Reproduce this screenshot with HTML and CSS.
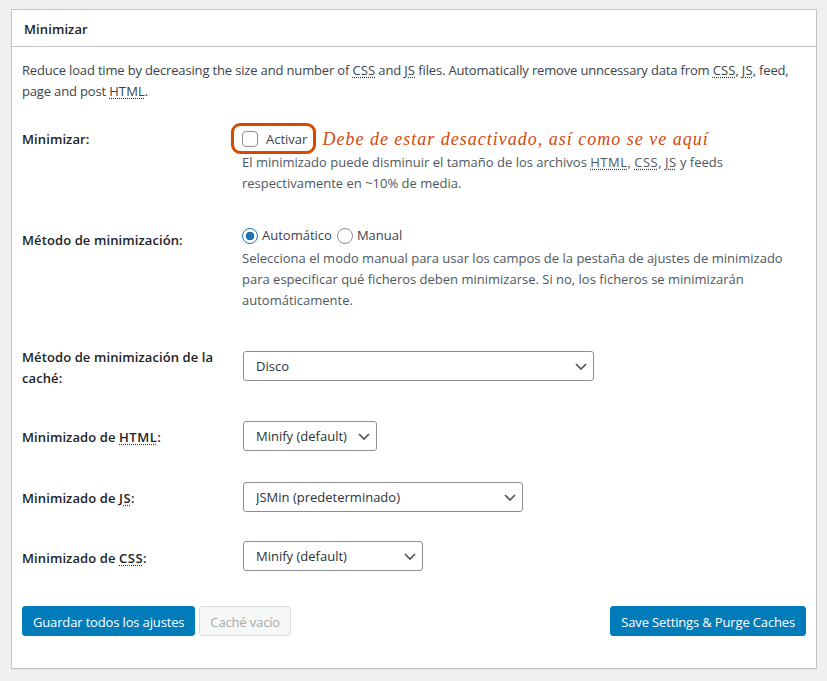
FILE: index.html
```html
<!DOCTYPE html>
<html lang="es">
<head>
<meta charset="utf-8">
<title>Minimizar</title>
<link rel="stylesheet" href="styles.css">
</head>
<body>
<section class="card">
  <h2 class="card-title">Minimizar</h2>
  <div class="card-body">
    <p class="intro">Reduce load time by decreasing the size and number of <abbr>CSS</abbr> and <abbr>JS</abbr> files. Automatically remove unncessary data from <abbr>CSS</abbr>, <abbr>JS</abbr>, feed, page and post <abbr>HTML</abbr>.</p>

    <div class="row row-enable">
      <div class="label">Minimizar:</div>
      <div class="field">
        <div class="control-line">
          <label class="check-label"><input type="checkbox" class="check"> Activar</label>
          <span class="note">Debe de estar desactivado, así como se ve aquí</span>
          <span class="highlight"></span>
        </div>
        <p class="desc desc-enable">El minimizado puede disminuir el tamaño de los archivos <abbr>HTML</abbr>, <abbr>CSS</abbr>, <abbr>JS</abbr> y feeds respectivamente en ~10% de media.</p>
      </div>
    </div>

    <div class="row row-method">
      <div class="label">Método de minimización:</div>
      <div class="field">
        <div class="radio-line">
          <label class="radio-label"><input type="radio" name="m" class="radio" checked> Automático</label>
          <label class="radio-label"><input type="radio" name="m" class="radio"> Manual</label>
        </div>
        <p class="desc desc-method">Selecciona el modo manual para usar los campos de la pestaña de ajustes de minimizado para especificar qué ficheros deben minimizarse. Si no, los ficheros se minimizarán automáticamente.</p>
      </div>
    </div>

    <div class="row row-cache">
      <div class="label">Método de minimización de la caché:</div>
      <div class="field"><select class="select select-disk"><option>Disco</option></select></div>
    </div>

    <div class="row row-html">
      <div class="label">Minimizado de <abbr>HTML</abbr>:</div>
      <div class="field"><select class="select select-html"><option>Minify (default)</option></select></div>
    </div>

    <div class="row row-js">
      <div class="label">Minimizado de <abbr>JS</abbr>:</div>
      <div class="field"><select class="select select-js"><option>JSMin (predeterminado)</option></select></div>
    </div>

    <div class="row row-css">
      <div class="label">Minimizado de <abbr>CSS</abbr>:</div>
      <div class="field"><select class="select select-css"><option>Minify (default)</option></select></div>
    </div>

    <div class="actions">
      <button class="btn btn-primary">Guardar todos los ajustes</button>
      <button class="btn btn-disabled" disabled>Caché vacío</button>
      <button class="btn btn-primary btn-right">Save Settings &amp; Purge Caches</button>
    </div>
  </div>
</section>
</body>
</html>
```
FILE: styles.css
```css
* { box-sizing: border-box; }
html, body { margin: 0; padding: 0; }
body {
  width: 827px;
  height: 681px;
  overflow: hidden;
  background: #f0f0f1;
  color: #3c434a;
  font-family: "Open Sans", "Noto Sans", sans-serif;
  font-size: 13px;
  line-height: 21px;
  padding: 9px 10px 0 11px;
}
.card {
  height: 660px;
  background: #fff;
  border: 1px solid #c3c4c7;
  box-shadow: 0 1px 1px rgba(0,0,0,.04);
}
.card-title {
  margin: 0;
  height: 37px;
  padding: 9px 12px 0;
  border-bottom: 1px solid #c3c4c7;
  font-size: 13px;
  font-weight: 600;
  line-height: 21px;
  letter-spacing: .1px;
  color: #1d2327;
}
.card-body { padding: 13px 10px 0; }
.intro { margin: 0; height: 42px; letter-spacing: -.16px; }
.intro abbr { letter-spacing: .1px; }
abbr {
  letter-spacing: .5px;
  text-decoration: underline dotted #3c434a;
  text-underline-offset: 2px;
}
.row { display: flex; }
.label {
  width: 221px;
  flex: none;
  padding-right: 20px;
  font-weight: 600;
  letter-spacing: .1px;
  color: #1d2327;
}
.field { flex: 1; min-width: 0; }
.desc { margin: 0 0 0 -1px; color: #50575e; }
.desc-enable { margin-top: -3px; }
.desc-method { margin-top: 2px; }
.row-enable { margin-top: 17px; height: 75px; }
.row-enable .label { padding-top: 10px; }
.control-line {
  position: relative;
  display: flex;
  align-items: center;
  height: 32px;
  margin-top: 4px;
}
.check-label { display: flex; align-items: center; }
.check {
  appearance: none;
  width: 16px;
  height: 16px;
  margin: 0 8px 0 -1px;
  background: #fff;
  border: 1px solid #8c8f94;
  border-radius: 4px;
}
.note {
  margin-left: 15px;
  font-family: "Liberation Serif", serif;
  font-style: italic;
  font-size: 18px;
  letter-spacing: 1px;
  color: #d24a0b;
}
.highlight {
  position: absolute;
  left: -12px;
  top: 0;
  width: 85px;
  height: 31px;
  border: 3px solid #d64a00;
  border-radius: 9px;
}
.row-method { margin-top: 31px; height: 91px; }
.radio-line { display: flex; align-items: center; height: 21px; }
.radio-label { display: flex; align-items: center; margin-right: 6px; }
.radio {
  appearance: none;
  width: 16px;
  height: 16px;
  margin: 0 4px 0 -1px;
  background: #fff;
  border: 1px solid #8c8f94;
  border-radius: 50%;
}
.radio:checked {
  background: radial-gradient(circle, #2271b1 0 4px, #fff 4.6px);
  border-color: #2271b1;
}
.row-method .label { padding-top: 5px; }
.row-cache { margin-top: 35px; height: 43px; }
.row-cache .label { margin-top: -4px; }
.row-html { margin-top: 27px; height: 30px; }
.row-js { margin-top: 31px; height: 30px; }
.row-css { margin-top: 29px; height: 30px; }
.row-html .label, .row-js .label { padding-top: 6px; }
.row-css .label { padding-top: 7px; }
.select {
  display: block;
  appearance: none;
  height: 30px;
  padding: 0 24px 0 12px;
  font: inherit;
  color: #2c3338;
  background: #fff url("data:image/svg+xml;utf8,<svg xmlns='http://www.w3.org/2000/svg' width='16' height='16' viewBox='0 0 16 16'><path d='M3 6l5 5 5-5' fill='none' stroke='%23555' stroke-width='1.7'/></svg>") no-repeat right 4px center;
  border: 1px solid #8c8f94;
  border-radius: 3px;
}
.select-disk { width: 351px; }
.select-html { width: 134px; }
.select-js { width: 280px; }
.select-css { width: 180px; }
.actions { display: flex; gap: 4px; margin-top: 35px; }
.btn {
  height: 30px;
  padding: 2px 10px 0;
  font: inherit;
  letter-spacing: -.15px;
  border: 1px solid transparent;
  border-radius: 3px;
}
.btn-primary { background: #007cba; border-color: #007cba; color: #fff; }
.btn-disabled { background: #f6f7f7; border-color: #dcdcde; color: #a7aaad; }
.btn-right { margin-left: auto; }
```
